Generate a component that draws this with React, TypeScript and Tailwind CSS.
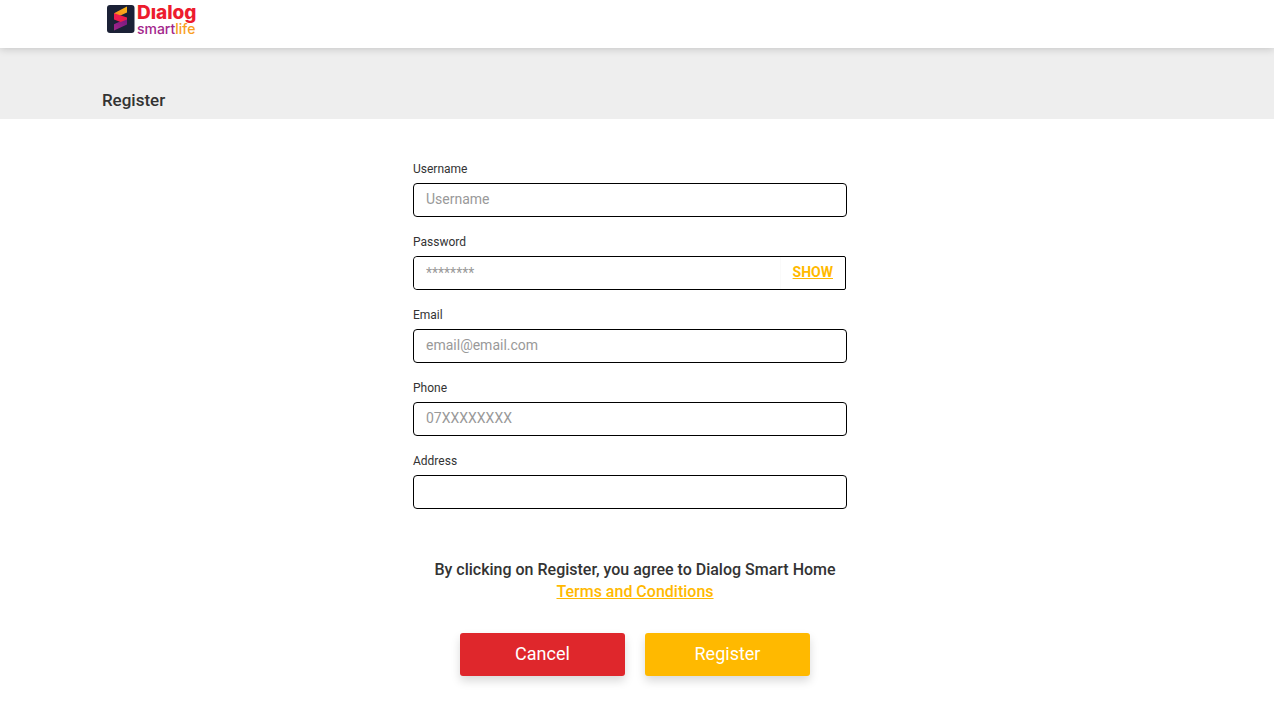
import { useState } from "react";
import type { ReactNode } from "react";

const inputClass =
  "block h-[34px] w-full rounded border border-black bg-white px-3 pb-0.5 text-sm text-[#333] outline-none placeholder:text-[#999]";

function Logo() {
  return (
    <a href="#home" aria-label="Dialog smartlife" className="flex items-start gap-0.5 pt-1 pl-[5px]">
      <svg viewBox="0 0 28 28" className="mt-px h-7 w-7" aria-hidden="true">
        <defs>
          <linearGradient id="gold" x1="0" y1="1" x2="1" y2="0">
            <stop offset="0" stopColor="#f58220" />
            <stop offset="1" stopColor="#fdbb16" />
          </linearGradient>
          <linearGradient id="plum" x1="0" y1="1" x2="1" y2="0">
            <stop offset="0" stopColor="#a3268c" />
            <stop offset="1" stopColor="#75197c" />
          </linearGradient>
        </defs>
        <rect width="27.5" height="28" rx="3" fill="#1b2136" />
        <path d="M7 8.2 20 1.6V7.4L9.5 12.2Z" fill="url(#gold)" />
        <path d="M20 13.2V19.6L7 25.6V19.2Z" fill="url(#plum)" />
        <path d="M7 8.2 20 12.6V14.4L13.6 17 7 14.6Z" fill="#ee1c4e" />
      </svg>
      <span className="flex flex-col font-[Inter,sans-serif]">
        <span className="-mt-px text-[19px] leading-[19px] font-extrabold text-[#ed1c2e]">Dıalog</span>
        <span className="text-sm leading-[14px] font-medium text-[#a3268c]">
          smart<span className="text-[#f9a01f]">life</span>
        </span>
      </span>
    </a>
  );
}

function Field({ id, label, children }: { id: string; label: string; children: ReactNode }) {
  return (
    <div>
      <label htmlFor={id} className="mb-[5px] block text-xs leading-[18px] text-[#333]">
        {label}
      </label>
      {children}
    </div>
  );
}

export default function App() {
  const [visible, setVisible] = useState(false);

  return (
    <div className="min-h-screen bg-white font-[Roboto,sans-serif] text-[#333]">
      <header className="relative flex h-12 items-start bg-white px-[8%] shadow-[0_1px_8px_rgba(0,0,0,0.18)]">
        <Logo />
      </header>
      <div className="bg-[#eee] px-[8%] pt-10 pb-[7px]">
        <h1 className="text-[17px] leading-6 font-medium">Register</h1>
      </div>
      <main className="pt-[41px] pr-1 pb-6">
        <form className="mx-auto max-w-[444px]" onSubmit={(e) => e.preventDefault()}>
          <div className="flex flex-col gap-4 pr-2.5">
            <Field id="username" label="Username">
              <input id="username" type="text" placeholder="Username" className={inputClass} />
            </Field>
            <Field id="password" label="Password">
              <div className="mr-px flex h-[34px] rounded-l rounded-r-xs border border-black">
                <input
                  id="password"
                  type={visible ? "text" : "password"}
                  placeholder="********"
                  className="min-w-0 flex-1 rounded-l bg-white px-3 text-sm outline-none placeholder:text-[#999]"
                />
                <button
                  type="button"
                  onClick={() => setVisible(!visible)}
                  className="border-l border-[#fafafa] px-3 pb-0.5 text-sm font-bold text-[#ffb900] underline"
                >
                  {visible ? "HIDE" : "SHOW"}
                </button>
              </div>
            </Field>
            <Field id="email" label="Email">
              <input id="email" type="email" placeholder="email@email.com" className={inputClass} />
            </Field>
            <Field id="phone" label="Phone">
              <input id="phone" type="tel" placeholder="07XXXXXXXX" className={inputClass} />
            </Field>
            <Field id="address" label="Address">
              <input id="address" type="text" className={inputClass} />
            </Field>
          </div>
          <p className="mt-[50px] text-center text-base leading-[22px] font-medium">
            By clicking on Register, you agree to Dialog Smart Home
            <br />
            <a href="#terms" className="text-[#ffb900] underline">
              Terms and Conditions
            </a>
          </p>
          <div className="mt-[30px] flex justify-center gap-5">
            <button
              type="button"
              className="h-[43px] w-[165px] rounded-[3px] bg-[#df272c] pb-0.5 text-lg text-white shadow-[0_5px_10px_rgba(0,0,0,0.15)]"
            >
              Cancel
            </button>
            <button
              type="submit"
              className="h-[43px] w-[165px] rounded-[3px] bg-[#ffb900] pb-0.5 text-lg text-white shadow-[0_5px_10px_rgba(0,0,0,0.15)]"
            >
              Register
            </button>
          </div>
        </form>
      </main>
    </div>
  );
}
